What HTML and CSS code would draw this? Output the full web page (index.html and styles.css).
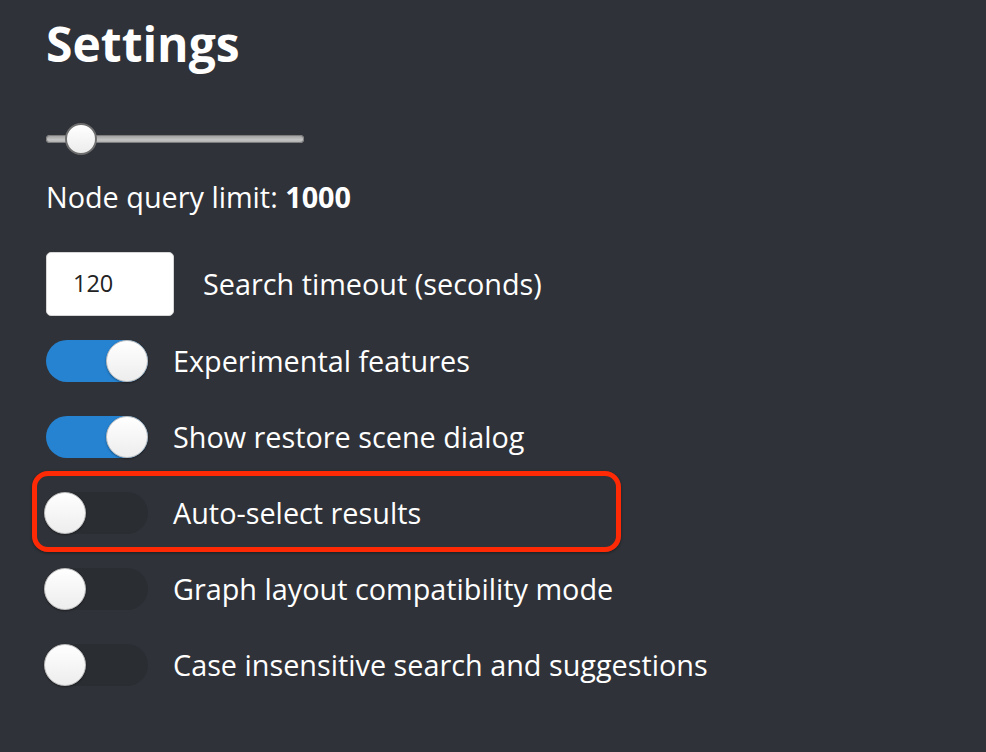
FILE: index.html
```html
<!DOCTYPE html>
<html lang="en">
<head>
<meta charset="utf-8">
<title>Settings</title>
<link rel="stylesheet" href="styles.css">
</head>
<body>
<main class="settings">
  <h1 class="title">Settings</h1>
  <div class="slider">
    <div class="slider-track"></div>
    <div class="slider-thumb"></div>
  </div>
  <p class="limit">Node query limit: <b>1000</b></p>
  <div class="row row-input">
    <div class="num-input">120</div>
    <span class="label">Search timeout (seconds)</span>
  </div>
  <div class="toggles">
    <div class="row">
      <span class="toggle on"><span class="knob"></span></span>
      <span class="label">Experimental features</span>
    </div>
    <div class="row">
      <span class="toggle on"><span class="knob"></span></span>
      <span class="label">Show restore scene dialog</span>
    </div>
    <div class="row highlighted">
      <span class="toggle"><span class="knob"></span></span>
      <span class="label">Auto-select results</span>
    </div>
    <div class="row">
      <span class="toggle"><span class="knob"></span></span>
      <span class="label">Graph layout compatibility mode</span>
    </div>
    <div class="row">
      <span class="toggle"><span class="knob"></span></span>
      <span class="label">Case insensitive search and suggestions</span>
    </div>
  </div>
</main>
</body>
</html>
```

FILE: styles.css
```css
html, body {
  margin: 0;
  padding: 0;
  background: #2f3238;
  height: 100%;
}

body {
  font-family: "Open Sans", "Noto Sans", sans-serif;
  color: #ffffff;
}

.settings {
  display: flex;
  flex-direction: column;
  padding-left: 46px;
}

.title {
  margin: 12px 0 0;
  font-size: 48px;
  line-height: 64px;
  font-weight: 700;
}

.slider {
  position: relative;
  width: 258px;
  height: 30px;
  margin-top: 48px;
  display: flex;
  align-items: center;
}

.slider-track {
  width: 100%;
  height: 8px;
  border-radius: 4px;
  background: linear-gradient(#9a9a9a, #c4c4c4 60%, #a8a8a8);
  box-shadow: inset 0 0 0 1px #7d7d7d;
}

.slider-thumb {
  position: absolute;
  left: 19px;
  top: -1px;
  width: 28px;
  height: 28px;
  border-radius: 50%;
  border: 2px solid #6e6e6e;
  background: linear-gradient(#ffffff, #ececec);
}

.limit {
  margin: 25px 0 0;
  font-size: 28.8px;
  line-height: 36px;
}

.limit b {
  font-weight: 700;
}

.row {
  display: flex;
  align-items: center;
  gap: 25px;
  font-size: 28.8px;
  line-height: 36px;
}

.row-input {
  margin-top: 37px;
  gap: 29px;
}

.num-input {
  box-sizing: border-box;
  width: 128px;
  height: 64px;
  border-radius: 5px;
  background: #ffffff;
  border: 1px solid #d6d6d6;
  color: #222;
  font-size: 23.5px;
  line-height: 1;
  padding-left: 26px;
  display: flex;
  align-items: center;
}

.toggles {
  display: flex;
  flex-direction: column;
  gap: 34px;
  margin-top: 24px;
}

.toggle {
  position: relative;
  display: block;
  width: 102px;
  height: 42px;
  border-radius: 21px;
  background: #2a2d32;
  flex: none;
}

.toggle.on {
  background: #2683d1;
}

.knob {
  position: absolute;
  top: 0;
  left: -2px;
  box-sizing: border-box;
  width: 42px;
  height: 42px;
  border-radius: 50%;
  background: linear-gradient(#ffffff, #ededed);
  border: 1px solid #bdbdbd;
  box-shadow: 0 1px 2px rgba(0, 0, 0, 0.35);
}

.toggle.on .knob {
  left: 60px;
}

.highlighted {
  position: relative;
}

.highlighted::after {
  content: "";
  position: absolute;
  left: -14px;
  top: -21px;
  width: 589px;
  height: 81px;
  box-sizing: border-box;
  border: 5px solid #fe2a06;
  border-radius: 16px;
  box-shadow: 0 1px 3px rgba(0, 0, 0, 0.4);
  pointer-events: none;
}
```
